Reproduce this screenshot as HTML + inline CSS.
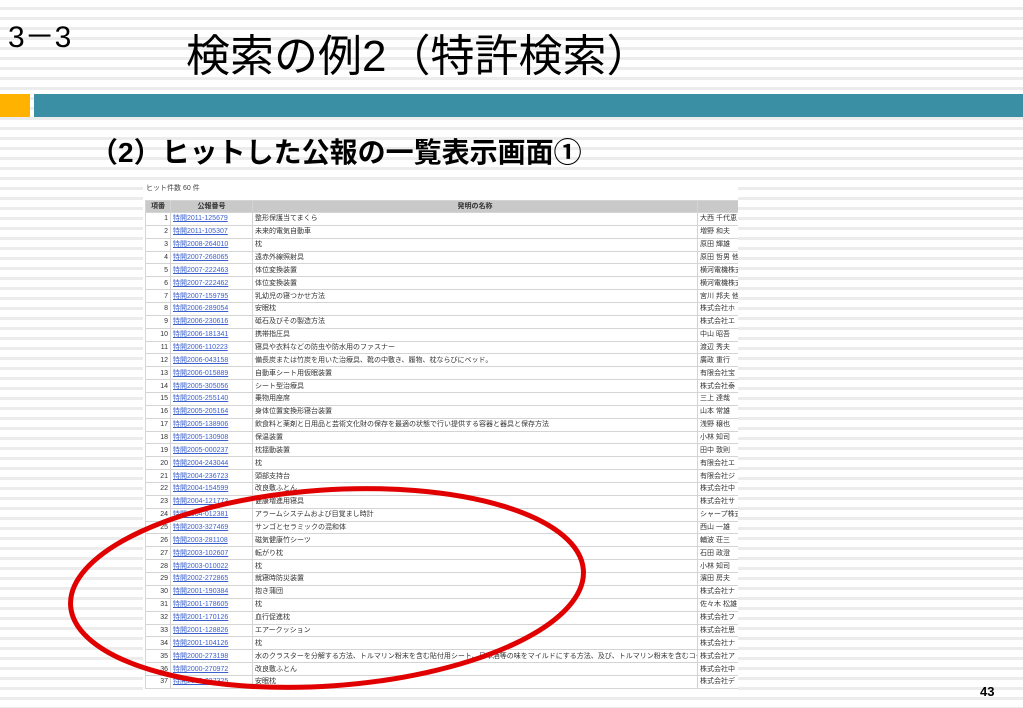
<!DOCTYPE html>
<html><head><meta charset="utf-8"><style>
body{margin:0;width:1023px;height:708px;overflow:hidden;position:relative;font-family:"Liberation Sans","Noto Sans CJK JP",sans-serif;
background:repeating-linear-gradient(to bottom,#fff 0,#fff 7px,#ececec 7px,#ececec 10px);}
.a{position:absolute}
#shot{left:143px;top:181px;width:595px;height:509px;background:#fff;overflow:hidden}
table{position:absolute;left:2px;top:19px;border-collapse:collapse;table-layout:fixed;font-size:7px;color:#333;width:640px}
td,th{border:1px solid #d4d4d4;height:11.86px;padding:0 2px;white-space:nowrap;overflow:hidden;line-height:11px}
th{background:#c9c9c9;font-weight:bold;height:10px}
td.n{text-align:right}
td.l{color:#3a5fcf;text-decoration:underline}
</style></head><body>
<div class="a" style="left:8px;top:12px;font-size:30px;color:#000">3－3</div>
<div class="a" style="left:186px;top:20px;font-size:44px;color:#000;white-space:nowrap">検索の例2（特許検索）</div>
<div class="a" style="left:0;top:94px;width:30px;height:23px;background:#ffb300"></div>
<div class="a" style="left:34px;top:94px;width:989px;height:23px;background:#3a8fa4"></div>
<div class="a" style="left:90px;top:131px;font-size:28px;font-weight:bold;color:#000;white-space:nowrap">（2）ヒットした公報の一覧表示画面①</div>
<div class="a" id="shot">
<div class="a" style="left:3px;top:2px;font-size:7px;color:#444">ヒット件数 60 件</div>
<table>
<colgroup><col style="width:25px"><col style="width:82px"><col style="width:445px"><col style="width:88px"></colgroup>
<tr><th>項番</th><th>公報番号</th><th>発明の名称</th><th></th></tr>
<tr><td class="n">1</td><td class="l">特開2011-125679</td><td>整形保護当てまくら</td><td>大西 千代恵</td></tr>
<tr><td class="n">2</td><td class="l">特開2011-105307</td><td>未来的電気自動車</td><td>増野 和夫</td></tr>
<tr><td class="n">3</td><td class="l">特開2008-264010</td><td>枕</td><td>原田 輝雄</td></tr>
<tr><td class="n">4</td><td class="l">特開2007-268065</td><td>遠赤外線照射具</td><td>原田 哲男 他</td></tr>
<tr><td class="n">5</td><td class="l">特開2007-222463</td><td>体位変換装置</td><td>横河電機株式</td></tr>
<tr><td class="n">6</td><td class="l">特開2007-222462</td><td>体位変換装置</td><td>横河電機株式</td></tr>
<tr><td class="n">7</td><td class="l">特開2007-159795</td><td>乳幼児の寝つかせ方法</td><td>宮川 邦夫 他</td></tr>
<tr><td class="n">8</td><td class="l">特開2006-289054</td><td>安眠枕</td><td>株式会社ホ</td></tr>
<tr><td class="n">9</td><td class="l">特開2006-230616</td><td>砥石及びその製造方法</td><td>株式会社エ</td></tr>
<tr><td class="n">10</td><td class="l">特開2006-181341</td><td>携帯指圧具</td><td>中山 昭吾</td></tr>
<tr><td class="n">11</td><td class="l">特開2006-110223</td><td>寝具や衣料などの防虫や防水用のファスナー</td><td>渡辺 秀夫</td></tr>
<tr><td class="n">12</td><td class="l">特開2006-043158</td><td>備長炭または竹炭を用いた治療具、靴の中敷き、履物、枕ならびにベッド。</td><td>廣政 重行</td></tr>
<tr><td class="n">13</td><td class="l">特開2006-015889</td><td>自動車シート用仮眠装置</td><td>有限会社宝</td></tr>
<tr><td class="n">14</td><td class="l">特開2005-305056</td><td>シート型治療具</td><td>株式会社泰</td></tr>
<tr><td class="n">15</td><td class="l">特開2005-255140</td><td>乗物用座席</td><td>三上 達哉</td></tr>
<tr><td class="n">16</td><td class="l">特開2005-205164</td><td>身体位置変換形寝台装置</td><td>山本 常雄</td></tr>
<tr><td class="n">17</td><td class="l">特開2005-138906</td><td>飲食料と薬剤と日用品と芸術文化財の保存を最適の状態で行い提供する容器と器具と保存方法</td><td>浅野 穣也</td></tr>
<tr><td class="n">18</td><td class="l">特開2005-130908</td><td>保温装置</td><td>小林 知司</td></tr>
<tr><td class="n">19</td><td class="l">特開2005-000237</td><td>枕揺動装置</td><td>田中 敦則</td></tr>
<tr><td class="n">20</td><td class="l">特開2004-243044</td><td>枕</td><td>有限会社エ</td></tr>
<tr><td class="n">21</td><td class="l">特開2004-236723</td><td>頭部支持台</td><td>有限会社ジ</td></tr>
<tr><td class="n">22</td><td class="l">特開2004-154599</td><td>改良敷ふとん</td><td>株式会社中</td></tr>
<tr><td class="n">23</td><td class="l">特開2004-121772</td><td>健康増進用寝具</td><td>株式会社サ</td></tr>
<tr><td class="n">24</td><td class="l">特開2004-012381</td><td>アラームシステムおよび目覚まし時計</td><td>シャープ株式</td></tr>
<tr><td class="n">25</td><td class="l">特開2003-327469</td><td>サンゴとセラミックの混和体</td><td>西山 一雄</td></tr>
<tr><td class="n">26</td><td class="l">特開2003-281108</td><td>磁気健康竹シーツ</td><td>輔波 荘三</td></tr>
<tr><td class="n">27</td><td class="l">特開2003-102607</td><td>転がり枕</td><td>石田 政澄</td></tr>
<tr><td class="n">28</td><td class="l">特開2003-010022</td><td>枕</td><td>小林 知司</td></tr>
<tr><td class="n">29</td><td class="l">特開2002-272865</td><td>就寝時防災装置</td><td>濱田 房夫</td></tr>
<tr><td class="n">30</td><td class="l">特開2001-190384</td><td>抱き蒲団</td><td>株式会社ナ</td></tr>
<tr><td class="n">31</td><td class="l">特開2001-178605</td><td>枕</td><td>佐々木 松雄</td></tr>
<tr><td class="n">32</td><td class="l">特開2001-170126</td><td>血行促進枕</td><td>株式会社フ</td></tr>
<tr><td class="n">33</td><td class="l">特開2001-128826</td><td>エアークッション</td><td>株式会社思</td></tr>
<tr><td class="n">34</td><td class="l">特開2001-104126</td><td>枕</td><td>株式会社ナ</td></tr>
<tr><td class="n">35</td><td class="l">特開2000-273198</td><td>水のクラスターを分解する方法、トルマリン粉末を含む貼付用シート、日本酒等の味をマイルドにする方法、及び、トルマリン粉末を含むコースター</td><td>株式会社ア</td></tr>
<tr><td class="n">36</td><td class="l">特開2000-270972</td><td>改良敷ふとん</td><td>株式会社中</td></tr>
<tr><td class="n">37</td><td class="l">特開2000-237325</td><td>安眠枕</td><td>株式会社デ</td></tr>
</table>
</div>
<svg class="a" style="left:0;top:0" width="1023" height="708"><ellipse cx="327" cy="588" rx="257" ry="98" transform="rotate(-4 327 588)" fill="none" stroke="#e00000" stroke-width="5"/></svg>
<div class="a" style="left:980px;top:684px;font-size:13px;font-weight:bold;color:#000">43</div>
</body></html>
